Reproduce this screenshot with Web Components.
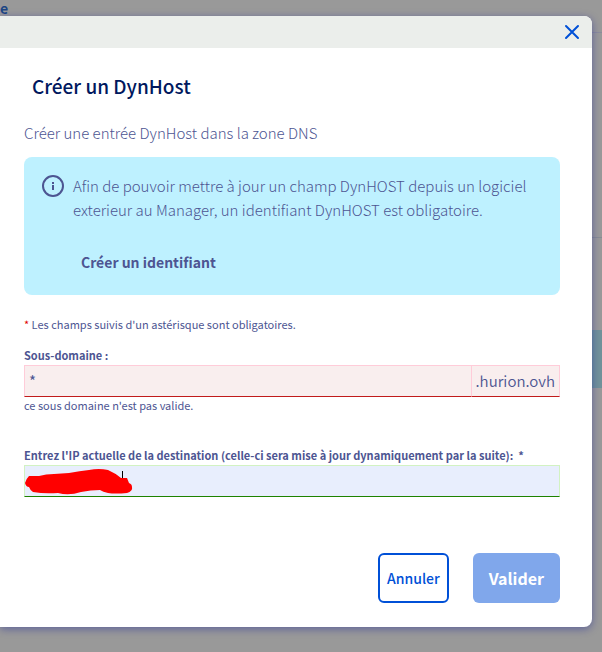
<!DOCTYPE html>
<html lang="fr">
<head>
    <meta charset="utf-8">
    <meta name="viewport" content="width=device-width, initial-scale=1">
    <title>Créer un DynHost</title>
    <style>
        body {
            margin: 0;
            --text: #4d5592;
            --heading: #00185e;
            --primary: #0050d7;
            color: var(--text);
            background: #999;
            font-family: "Noto Sans CJK SC", "Open Sans", sans-serif;
            font-size: 15px;
            font-weight: 300;
            line-height: 24px;
        }
    </style>
</head>
<body>
    <app-shell>
        <zone-page slot="page"></zone-page>
        <modal-dialog heading="Créer un DynHost">
            <p>Créer une entrée DynHost dans la zone DNS</p>
            <info-message action="Créer un identifiant">Afin de pouvoir mettre à jour un champ DynHOST depuis un logiciel exterieur au Manager, un identifiant DynHOST est obligatoire.</info-message>
            <required-hint>Les champs suivis d'un astérisque sont obligatoires.</required-hint>
            <form-field label="Sous-domaine :" value="*" suffix=".hurion.ovh" state="invalid" message="ce sous domaine n'est pas valide."></form-field>
            <form-field label="Entrez l'IP actuelle de la destination (celle-ci sera mise à jour dynamiquement par la suite):&nbsp; *" state="valid">
                <ink-mark slot="mark"></ink-mark>
            </form-field>
            <action-button slot="actions" variant="secondary">Annuler</action-button>
            <action-button slot="actions" variant="primary" disabled>Valider</action-button>
        </modal-dialog>
    </app-shell>

    <script>
        // Stacks the page and the dialog in one grid cell
        class AppShell extends HTMLElement {
            constructor() {
                super();
                this.attachShadow({ mode: 'open' }).innerHTML = `
                    <style>
                        :host {
                            display: grid;
                            min-height: 100vh;
                            overflow: hidden;
                        }

                        .layer {
                            grid-area: 1 / 1;
                            min-width: 0;
                        }

                        .front {
                            z-index: 1;
                            padding: 16px 10px 24px 0;
                        }
                    </style>
                    <div class="layer"><slot name="page"></slot></div>
                    <div class="layer front"><slot></slot></div>
                `;
            }
        }

        // Dimmed page behind the dialog
        class ZonePage extends HTMLElement {
            constructor() {
                super();
                this.attachShadow({ mode: 'open' }).innerHTML = `
                    <style>
                        :host {
                            display: block;
                        }

                        .tab {
                            height: 33px;
                            box-sizing: border-box;
                            border-bottom: 1px solid #8c8c9c;
                            color: #1c4584;
                            font-size: 14px;
                            font-weight: 700;
                            line-height: 16px;
                        }

                        .panel {
                            height: 204px;
                            border-bottom: 1px solid #888c93;
                        }

                        .notice {
                            height: 58px;
                            margin-top: 92px;
                            background: #71929a;
                        }
                    </style>
                    <div class="tab">e</div>
                    <div class="panel"></div>
                    <div class="notice"></div>
                `;
            }
        }

        class ModalDialog extends HTMLElement {
            connectedCallback() {
                const heading = this.getAttribute('heading') || '';

                this.attachShadow({ mode: 'open' }).innerHTML = `
                    <style>
                        :host {
                            display: block;
                        }

                        section {
                            overflow: hidden;
                            border-radius: 0 8px 8px 0;
                            background: #fff;
                            box-shadow: 0 2px 8px rgba(0, 14, 156, 0.4);
                        }

                        header {
                            display: flex;
                            align-items: center;
                            justify-content: flex-end;
                            height: 32px;
                            padding: 0 12px;
                            background: #ebeeeb;
                        }

                        .close {
                            display: flex;
                            padding: 0;
                            border: none;
                            background: none;
                            color: var(--primary);
                            cursor: pointer;
                        }

                        .body {
                            padding: 24px 32px 24px 24px;
                        }

                        h2 {
                            margin: 0 8px 21px;
                            color: var(--heading);
                            font-size: 19px;
                            font-weight: 500;
                            line-height: 28px;
                        }

                        ::slotted(p) {
                            margin: 0 0 12px;
                        }

                        footer {
                            display: flex;
                            justify-content: flex-end;
                            gap: 24px;
                            margin-top: 56px;
                        }
                    </style>
                    <section role="dialog" aria-labelledby="heading">
                        <header>
                            <button class="close" type="button" aria-label="Fermer">
                                <svg width="16" height="16" viewBox="0 0 16 16" fill="none" stroke="currentColor" stroke-width="2" stroke-linecap="round">
                                    <path d="M2 2 L14 14 M14 2 L2 14"/>
                                </svg>
                            </button>
                        </header>
                        <div class="body">
                            <h2 id="heading">${heading}</h2>
                            <slot></slot>
                            <footer><slot name="actions"></slot></footer>
                        </div>
                    </section>
                `;
            }
        }

        class InfoMessage extends HTMLElement {
            connectedCallback() {
                const action = this.getAttribute('action') || '';

                this.attachShadow({ mode: 'open' }).innerHTML = `
                    <style>
                        :host {
                            display: flex;
                            gap: 9px;
                            padding: 17px 16px 21px;
                            border-radius: 8px;
                            background: #bef1ff;
                        }

                        svg {
                            flex: none;
                            width: 24px;
                            height: 24px;
                        }

                        .content {
                            flex: 1;
                        }

                        a {
                            display: block;
                            margin: 28px 8px 0;
                            color: inherit;
                            font-size: 14px;
                            font-weight: 700;
                            text-decoration: none;
                        }
                    </style>
                    <svg viewBox="0 0 24 24" aria-hidden="true">
                        <circle cx="13" cy="12" r="10" fill="none" stroke="#4d5592" stroke-width="2"/>
                        <path d="M12 8h2v2h-2zM12 11h2v5h-2z" fill="#4d5592"/>
                    </svg>
                    <div class="content">
                        <slot></slot>
                        <a href="#">${action}</a>
                    </div>
                `;
            }
        }

        class RequiredHint extends HTMLElement {
            constructor() {
                super();
                this.attachShadow({ mode: 'open' }).innerHTML = `
                    <style>
                        :host {
                            display: block;
                            margin: 19px 0 11px;
                            font-size: 11px;
                            font-weight: 400;
                            line-height: 20px;
                        }

                        span {
                            color: #e00000;
                        }
                    </style>
                    <span>*</span> <slot></slot>
                `;
            }
        }

        class FormField extends HTMLElement {
            connectedCallback() {
                const label = this.getAttribute('label') || '';
                const value = this.getAttribute('value') || '';
                const suffix = this.getAttribute('suffix');
                const message = this.getAttribute('message');

                this.attachShadow({ mode: 'open' }).innerHTML = `
                    <style>
                        :host {
                            display: block;
                            font-size: 11px;
                            font-weight: 400;
                            line-height: 20px;
                        }

                        :host([state="invalid"]) {
                            --edge: #ffccd9;
                            --underline: #c11b1b;
                            --fill: #f9eeee;
                            margin-bottom: 32px;
                        }

                        :host([state="valid"]) {
                            --edge: #d2f2c2;
                            --underline: #1e8200;
                            --fill: #e8eefd;
                        }

                        label {
                            display: block;
                            font-weight: 700;
                        }

                        .group {
                            position: relative;
                            display: flex;
                            height: 32px;
                        }

                        input, .suffix {
                            box-sizing: border-box;
                            border-width: 1px;
                            border-style: solid;
                            border-color: var(--edge) var(--edge) var(--underline);
                            background: var(--fill);
                            color: inherit;
                            font: inherit;
                            font-size: 15px;
                        }

                        input {
                            flex: 1;
                            min-width: 0;
                            padding: 0 4px;
                            border-radius: 0;
                            outline: none;
                        }

                        .suffix {
                            padding: 0 4px;
                            border-left: none;
                            font-weight: 350;
                            line-height: 30px;
                        }

                        .message {
                            display: block;
                            line-height: 16px;
                        }
                    </style>
                    <label for="field">${label}</label>
                    <div class="group">
                        <input id="field" type="text" value="${value}">
                        ${suffix ? `<span class="suffix">${suffix}</span>` : ''}
                        <slot name="mark"></slot>
                    </div>
                    ${message ? `<span class="message">${message}</span>` : ''}
                `;
            }
        }

        // Red scribble over the IP value, with the text cursor
        class InkMark extends HTMLElement {
            constructor() {
                super();
                this.attachShadow({ mode: 'open' }).innerHTML = `
                    <style>
                        :host {
                            position: absolute;
                            top: 0;
                            left: 0;
                            pointer-events: none;
                        }

                        svg {
                            display: block;
                        }
                    </style>
                    <svg width="112" height="32" viewBox="0 0 112 32" aria-hidden="true">
                        <path fill="#f00" d="M1 18 Q2 14 5 11 L15 11 Q22 9 30 9 L45 8 Q56 6 65 5 Q75 3 84 5 Q91 8 97 13 L103 13 L105 18 Q108 19 108 22 Q109 26 103 28 Q91 29 84 28 Q79 27 76 25 Q67 25 57 27 Q45 31 34 28 Q20 29 9 27 Q6 25 5 22 Q2 22 1 18Z"/>
                        <rect x="98" y="6" width="1" height="7" fill="#000"/>
                    </svg>
                `;
            }
        }

        class ActionButton extends HTMLElement {
            connectedCallback() {
                const disabled = this.hasAttribute('disabled');

                this.attachShadow({ mode: 'open' }).innerHTML = `
                    <style>
                        :host {
                            display: block;
                        }

                        button {
                            height: 50px;
                            padding: 0 7px;
                            border: 2px solid var(--primary);
                            border-radius: 6px;
                            background: #fff;
                            color: var(--primary);
                            font: inherit;
                            font-size: 14px;
                            font-weight: 500;
                            cursor: pointer;
                        }

                        :host([variant="primary"]) button {
                            padding: 0 14px;
                            border-color: transparent;
                            background: var(--primary) border-box;
                            color: #fff;
                            font-size: 16px;
                            font-weight: 700;
                        }

                        :host([variant="primary"]) button:disabled {
                            background: #80a7eb border-box;
                            cursor: not-allowed;
                        }
                    </style>
                    <button type="button" ${disabled ? 'disabled' : ''}><slot></slot></button>
                `;
            }
        }

        customElements.define('app-shell', AppShell);
        customElements.define('zone-page', ZonePage);
        customElements.define('modal-dialog', ModalDialog);
        customElements.define('info-message', InfoMessage);
        customElements.define('required-hint', RequiredHint);
        customElements.define('form-field', FormField);
        customElements.define('ink-mark', InkMark);
        customElements.define('action-button', ActionButton);
    </script>
</body>
</html>
